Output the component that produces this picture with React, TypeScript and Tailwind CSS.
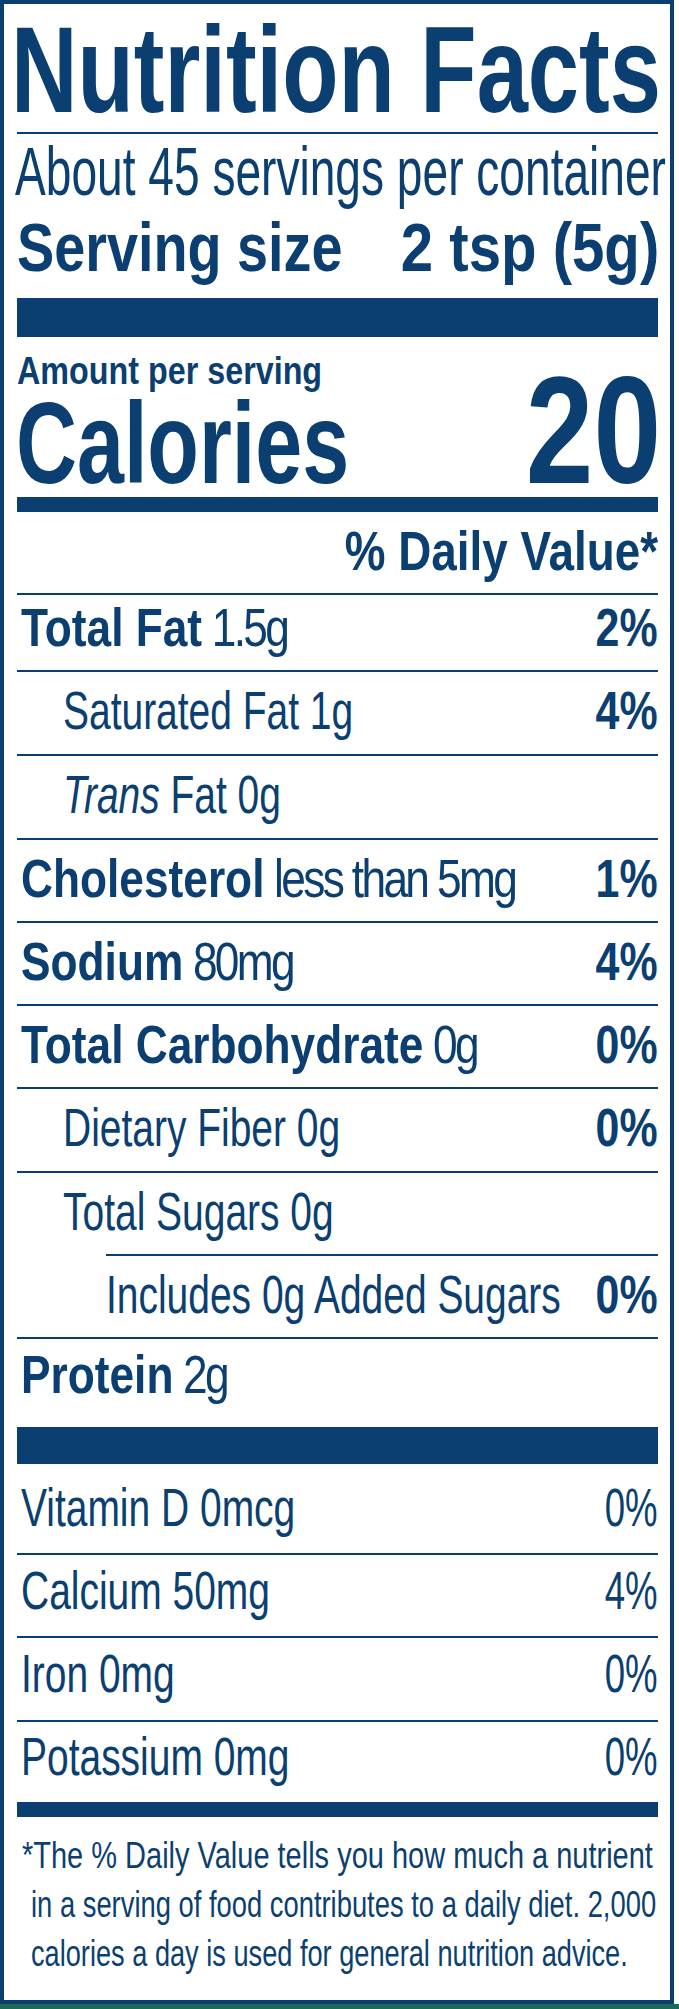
import type { ReactNode } from 'react';

interface RowProps {
  label: ReactNode;
  value?: string;
  regularValue?: boolean;
  labelScale: string;
  className: string;
  labelPad?: string;
}

function Row({ label, value, regularValue, labelScale, className, labelPad = 'pl-[4px]' }: RowProps) {
  return (
    <div className={`flex items-start text-[53px] leading-none ${className}`}>
      <div className={`flex-1 min-w-0 whitespace-nowrap ${labelPad}`}>
        <span className={`inline-block origin-left ${labelScale}`}>{label}</span>
      </div>
      {value && (
        <span
          className={`inline-block shrink-0 origin-right whitespace-nowrap ${
            regularValue ? 'scale-x-[0.69]' : 'font-bold scale-x-[0.81]'
          }`}
        >
          {value}
        </span>
      )}
    </div>
  );
}

const line = 'border-t-2 border-[#0b3f72]';

export default function App() {
  return (
    <div className="w-[679px] h-[2009px] overflow-hidden bg-white border-b-[5px] border-[#1c6b58] pr-[5px] font-['Liberation_Sans',Arial,sans-serif] text-[#0b3f72]">
      <div className="h-full border-4 border-[#0b3f72] pl-[13px] pr-[12px]">
        {/* header */}
        <div className="mt-[4px] text-[123px] leading-none font-bold whitespace-nowrap -ml-[6px]">
          <span className="inline-block origin-left scale-x-[0.749] -mr-[225px]">Nutrition Facts</span>
        </div>
        <div className="mt-[1px] h-[2px] bg-[#0b3f72]" />
        <div className="mt-[3px] text-[68px] leading-none whitespace-nowrap -ml-[2px]">
          <span className="inline-block origin-left scale-x-[0.678] -mr-[310px]">About 45 servings per container</span>
        </div>
        <div className="mt-[8px] flex text-[68px] leading-none font-bold">
          <div className="flex-1 min-w-0 whitespace-nowrap">
            <span className="inline-block origin-left scale-x-[0.82]">Serving size</span>
          </div>
          <span className="inline-block shrink-0 whitespace-nowrap origin-right scale-x-[0.855] -mr-[1px]">2 tsp (5g)</span>
        </div>
        <div className="mt-[17px] h-[39px] bg-[#0b3f72]" />

        {/* calories */}
        <div className="mt-[15px] flex items-end justify-between font-bold">
          <div>
            <div className="text-[38px] leading-none whitespace-nowrap">
              <span className="inline-block origin-left scale-x-[0.85]">Amount per serving</span>
            </div>
            <div className="mt-[1px] text-[115px] leading-[104px] whitespace-nowrap -ml-[1px]">
              <span className="inline-block origin-left scale-x-[0.734]">Calories</span>
            </div>
          </div>
          <div className="text-[152px] leading-[130px] -mr-[3px]">
            <span className="inline-block origin-right scale-x-[0.8]">20</span>
          </div>
        </div>
        <div className="mt-[2px] h-[15px] bg-[#0b3f72]" />
        <div className="mt-[12px] text-right text-[55px] leading-none font-bold whitespace-nowrap">
          <span className="inline-block origin-right scale-x-[0.833]">% Daily Value*</span>
        </div>

        {/* nutrients */}
        <div className="mt-[14px]">
          <Row
            className={`h-[77px] pt-[6px] ${line}`}
            labelScale="scale-x-[0.835]"
            label={
              <>
                <span className="font-bold">Total Fat</span>
                <span className="tracking-[-0.06em]"> 1.5g</span>
              </>
            }
            value="2%"
          />
          <Row className={`h-[84px] pt-[12px] ${line}`} labelPad="pl-[46px]" labelScale="scale-x-[0.735]" label="Saturated Fat 1g" value="4%" />
          <Row
            className={`h-[84px] pt-[12px] ${line}`}
            labelPad="pl-[46px]"
            labelScale="scale-x-[0.735]"
            label={
              <>
                <span className="italic">Trans</span> Fat 0g
              </>
            }
          />
          <Row
            className={`h-[83px] pt-[12px] ${line}`}
            labelScale="scale-x-[0.835]"
            label={
              <>
                <span className="font-bold">Cholesterol</span>
                <span className="tracking-[-0.06em]"> less than 5mg</span>
              </>
            }
            value="1%"
          />
          <Row
            className={`h-[83px] pt-[12px] ${line}`}
            labelScale="scale-x-[0.835]"
            label={
              <>
                <span className="font-bold">Sodium</span>
                <span className="tracking-[-0.06em]"> 80mg</span>
              </>
            }
            value="4%"
          />
          <Row
            className={`h-[83px] pt-[12px] ${line}`}
            labelScale="scale-x-[0.835]"
            label={
              <>
                <span className="font-bold">Total Carbohydrate</span>
                <span className="tracking-[-0.06em]"> 0g</span>
              </>
            }
            value="0%"
          />
          <Row className={`h-[84px] pt-[12px] ${line}`} labelPad="pl-[46px]" labelScale="scale-x-[0.735]" label="Dietary Fiber 0g" value="0%" />
          <Row className={`h-[83px] pt-[12px] ${line}`} labelPad="pl-[46px]" labelScale="scale-x-[0.735]" label="Total Sugars 0g" />
          <Row
            className={`h-[83px] ml-[89px] pt-[12px] ${line}`}
            labelPad="pl-0"
            labelScale="scale-x-[0.735]"
            label="Includes 0g Added Sugars"
            value="0%"
          />
          <Row
            className={`h-[90px] pt-[9px] ${line}`}
            labelScale="scale-x-[0.835]"
            label={
              <>
                <span className="font-bold">Protein</span>
                <span className="tracking-[-0.06em]"> 2g</span>
              </>
            }
          />
          <div className="h-[37px] bg-[#0b3f72]" />

          {/* vitamins & minerals */}
          <Row className="h-[89px] pt-[17px]" labelScale="scale-x-[0.735]" label="Vitamin D 0mcg" value="0%" regularValue />
          <Row className={`h-[83px] pt-[9px] ${line}`} labelScale="scale-x-[0.735]" label="Calcium 50mg" value="4%" regularValue />
          <Row className={`h-[84px] pt-[9px] ${line}`} labelScale="scale-x-[0.735]" label="Iron 0mg" value="0%" regularValue />
          <Row className={`h-[82px] pt-[8px] ${line}`} labelScale="scale-x-[0.735]" label="Potassium 0mg" value="0%" regularValue />
          <div className="h-[15px] bg-[#0b3f72]" />
        </div>

        {/* footnote */}
        <div className="pt-[14px] text-[36px] leading-[49px] whitespace-nowrap">
          <div className="pl-[5px]">
            <span className="inline-block origin-left scale-x-[0.805]">*The % Daily Value tells you how much a nutrient</span>
          </div>
          <div className="pl-[14px]">
            <span className="inline-block origin-left scale-x-[0.76]">in a serving of food contributes to a daily diet. 2,000</span>
          </div>
          <div className="pl-[14px]">
            <span className="inline-block origin-left scale-x-[0.755]">calories a day is used for general nutrition advice.</span>
          </div>
        </div>
      </div>
    </div>
  );
}
